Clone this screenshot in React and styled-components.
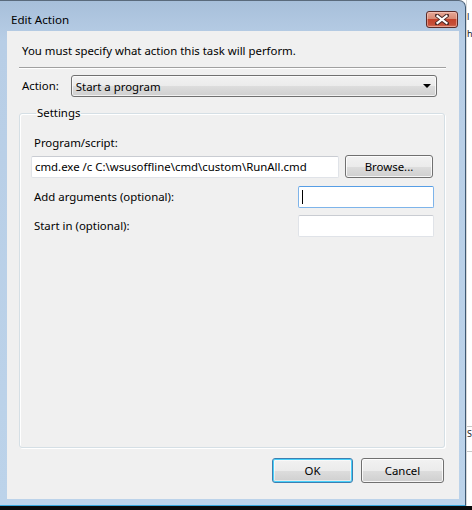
import React from "react";
import styled, { createGlobalStyle } from "styled-components";

const UI_FONT = `"Noto Sans", "DejaVu Sans", sans-serif`;

const GlobalStyle = createGlobalStyle`
  html, body {
    margin: 0;
    padding: 0;
    background: #ffffff;
    overflow: hidden;
  }
  * {
    box-sizing: border-box;
  }
`;

const Screen = styled.div`
  width: 472px;
  height: 510px;
  display: flex;
  flex-direction: column;
  font-family: ${UI_FONT};
  font-size: 11.4px;
  color: #000;
`;

const Desktop = styled.div`
  display: flex;
  flex: 1;
  min-height: 0;
`;

const Taskbar = styled.div`
  height: 4px;
  background: #0a0a0a;
`;

const Window = styled.div`
  width: 466px;
  height: 506px;
  display: flex;
  flex-direction: column;
  border-top: 1px solid #5a6a7c;
  border-right: 1px solid #3e5872;
  border-bottom: 1px solid #39a7dc;
  border-top-right-radius: 7px;
  background: linear-gradient(180deg, #a7bfda 0px, #b8cee6 40px, #bcd3ea 100%);
  padding: 0 6px 6px 7px;
`;

const TitleBar = styled.div`
  height: 30px;
  display: flex;
  align-items: flex-start;
  justify-content: space-between;
  margin-left: -7px;
  margin-right: -6px;
  padding: 10px 7px 0 11px;
`;

const Title = styled.div`
  font-size: 11.6px;
  line-height: 18px;
  color: #000;
`;

const CloseButton = styled.div`
  width: 32px;
  height: 17px;
  border: 1px solid #5b2b28;
  border-radius: 3px;
  background: linear-gradient(180deg, #e7a897 0%, #d88a74 45%, #c4432b 50%, #c6503a 85%, #d97a62 100%);
  box-shadow: inset 0 0 0 1px rgba(255, 220, 210, 0.45);
  display: flex;
  align-items: center;
  justify-content: center;
`;

const Content = styled.div`
  flex: 1;
  background: #f0f0f0;
  display: flex;
  flex-direction: column;
  padding: 12px 13px 0 12px;
`;

const Intro = styled.div`
  line-height: 16px;
  padding-left: 3px;
`;

const Separator = styled.div`
  margin-top: 8px;
  height: 2px;
  border-top: 1px solid #a0a0a0;
  border-bottom: 1px solid #ffffff;
`;

const ActionRow = styled.div`
  margin-top: 6px;
  display: flex;
  align-items: center;
  gap: 12px;
  padding-left: 3px;
  padding-right: 9px;
`;

const Label = styled.div`
  line-height: 16px;
  white-space: nowrap;
  padding-left: ${(p) => p.$indent || 0}px;
`;

const Combo = styled.div`
  flex: 1;
  height: 22px;
  border: 1px solid #707070;
  border-radius: 3px;
  background: linear-gradient(180deg, #f2f2f2 0%, #ebebeb 50%, #dddddd 51%, #cfcfcf 100%);
  box-shadow: inset 0 0 0 1px rgba(255, 255, 255, 0.7);
  display: flex;
  align-items: center;
  justify-content: space-between;
  padding: 0 5px 0 4px;
`;

const ComboArrow = styled.div`
  width: 0;
  height: 0;
  border-left: 4px solid transparent;
  border-right: 4px solid transparent;
  border-top: 4px solid #000;
`;

const Group = styled.fieldset`
  margin: 8px 1px 0 0;
  padding: 14px 10px 0 11px;
  height: 343px;
  border: 1px solid #d5dfe5;
  border-radius: 3px;
  box-shadow: inset 1px 1px 0 #ffffff, 1px 1px 0 #ffffff;
  min-width: 0;
`;

const Legend = styled.legend`
  padding: 0 1px;
  margin-left: 5px;
  line-height: 16px;
`;

const FieldRow = styled.div`
  display: flex;
  align-items: center;
  justify-content: space-between;
  margin-top: ${(p) => p.$gap || 0}px;
`;

const TextBox = styled.div`
  width: ${(p) => p.$width}px;
  height: 22px;
  background: #ffffff;
  border: 1px solid ${(p) => (p.$focused ? "#7eb4ea" : "#e0e3e8")};
  border-top-color: ${(p) => (p.$focused ? "#569de5" : "#c9ccd2")};
  border-radius: 2px;
  display: flex;
  align-items: center;
  padding-left: 3px;
  white-space: nowrap;
  overflow: hidden;
`;

const Caret = styled.div`
  width: 1px;
  height: 14px;
  background: #000;
`;

const PushButton = styled.div`
  width: ${(p) => p.$width}px;
  height: ${(p) => p.$height || 23}px;
  margin-right: ${(p) => p.$trim || 0}px;
  border: 1px solid ${(p) => (p.$default ? "#3c7fb1" : "#707070")};
  border-radius: 3px;
  background: linear-gradient(180deg, #f2f2f2 0%, #ebebeb 50%, #dddddd 51%, #cfcfcf 100%);
  box-shadow: ${(p) =>
    p.$default
      ? "inset 0 0 0 1px #48d0fa, inset 0 0 0 2px rgba(255,255,255,0.5)"
      : "inset 0 0 0 1px rgba(255,255,255,0.8)"};
  display: flex;
  align-items: center;
  justify-content: center;
  line-height: 16px;
`;

const Footer = styled.div`
  margin-top: auto;
  display: flex;
  justify-content: flex-end;
  gap: 8px;
  padding: 0 2px 16px 0;
`;

const SideStrip = styled.div`
  flex: 1;
  position: relative;
  overflow: hidden;
  background: #ffffff;
  border-left: 1px solid #d8d8d8;
`;

const Fragment = styled.div`
  position: absolute;
  left: 0;
  top: ${(p) => p.$top}px;
  font-family: ${UI_FONT};
  font-size: 9px;
  line-height: 12px;
  color: #222;
`;

const StripLine = styled.div`
  position: absolute;
  left: 0;
  right: 0;
  top: ${(p) => p.$top}px;
  height: 1px;
  background: #c8c8c8;
`;

function CloseGlyph() {
  return (
    <svg width="14" height="11" viewBox="0 0 14 11">
      <path
        d="M2 1.5 L12 9.5 M12 1.5 L2 9.5"
        stroke="#4a2a28"
        strokeWidth="4"
        strokeLinecap="square"
      />
      <path
        d="M2.5 2 L11.5 9 M11.5 2 L2.5 9"
        stroke="#ffffff"
        strokeWidth="2.2"
        strokeLinecap="square"
      />
    </svg>
  );
}

export default function App() {
  return (
    <Screen>
      <GlobalStyle />
      <Desktop>
        <Window>
          <TitleBar>
            <Title>Edit Action</Title>
            <CloseButton>
              <CloseGlyph />
            </CloseButton>
          </TitleBar>
          <Content>
            <Intro>You must specify what action this task will perform.</Intro>
            <Separator />
            <ActionRow>
              <Label>Action:</Label>
              <Combo>
                <span>Start a program</span>
                <ComboArrow />
              </Combo>
            </ActionRow>
            <Group>
              <Legend>Settings</Legend>
              <Label $indent={3}>Program/script:</Label>
              <FieldRow $gap={4}>
                <TextBox $width={308}>
                  cmd.exe /c C:\wsusoffline\cmd\custom\RunAll.cmd
                </TextBox>
                <PushButton $width={88} $height={23} $trim={1}>
                  Browse...
                </PushButton>
              </FieldRow>
              <FieldRow $gap={8}>
                <Label $indent={3}>Add arguments (optional):</Label>
                <TextBox $width={136} $focused>
                  <Caret />
                </TextBox>
              </FieldRow>
              <FieldRow $gap={7}>
                <Label $indent={3}>Start in (optional):</Label>
                <TextBox $width={136} />
              </FieldRow>
            </Group>
            <Footer>
              <PushButton $width={81} $height={25} $default>
                OK
              </PushButton>
              <PushButton $width={83} $height={25}>
                Cancel
              </PushButton>
            </Footer>
          </Content>
        </Window>
        <SideStrip>
          <Fragment $top={11}>l</Fragment>
          <Fragment $top={28}>h</Fragment>
          <StripLine $top={426} />
          <Fragment $top={428}>S</Fragment>
          <StripLine $top={451} />
        </SideStrip>
      </Desktop>
      <Taskbar />
    </Screen>
  );
}
